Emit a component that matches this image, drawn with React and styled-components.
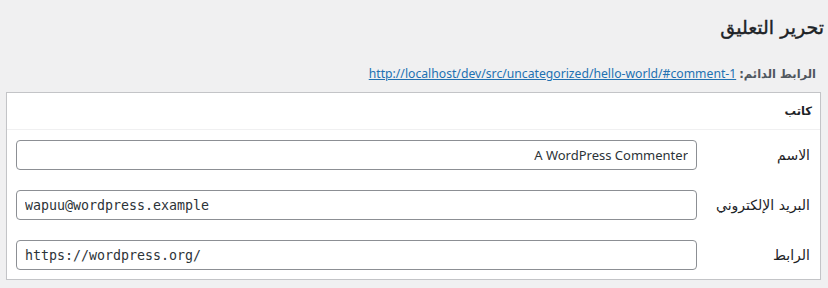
import React from 'react';
import styled, { createGlobalStyle } from 'styled-components';

const Global = createGlobalStyle`
  html, body {
    margin: 0;
    padding: 0;
    background: #f0f0f1;
  }
  body {
    direction: rtl;
    font-family: "DejaVu Sans", Tahoma, sans-serif;
    color: #3c434a;
    font-size: 13px;
  }
`;

const Wrap = styled.div`
  padding: 0 7px 0 7px;
`;

const Title = styled.h1`
  margin: 0 -3px 0 0;
  padding: 12px 0 0;
  font-size: 19px;
  font-weight: 400;
  line-height: 30px;
  color: #1d2327;
  -webkit-text-stroke: 0.4px #1d2327;
`;

const Permalink = styled.div`
  margin-top: 23px;
  padding-right: 5px;
  line-height: 18px;
  font-size: 11.5px;
  display: flex;
  align-items: baseline;
  gap: 3px;
`;

const PermaLabel = styled.strong`
  font-weight: 700;
  color: #50575e;
`;

const Link = styled.a`
  color: #2271b1;
  font-family: "Noto Sans", sans-serif;
  font-size: 12.2px;
  text-decoration: underline;
`;

const Box = styled.div`
  margin-top: 9px;
  margin-left: -1px;
  background: #fff;
  border: 1px solid #c3c4c7;
  box-shadow: 0 1px 1px rgba(0, 0, 0, 0.04);
`;

const BoxHead = styled.h2`
  margin: 0;
  padding: 0 8px;
  height: 36px;
  display: flex;
  align-items: center;
  font-size: 11.5px;
  font-weight: 700;
  color: #1d2327;
  border-bottom: 1px solid #f0f0f1;
`;

const Rows = styled.div`
  padding: 10px 9px 9px 9px;
  display: flex;
  flex-direction: column;
  gap: 20px;
`;

const Row = styled.div`
  display: flex;
  align-items: center;
  height: 30px;
`;

const Label = styled.label`
  width: 114px;
  flex: none;
  padding-right: 1px;
  box-sizing: border-box;
  font-size: 14px;
  color: #1d2327;
`;

const Input = styled.input`
  flex: 1;
  height: 30px;
  box-sizing: border-box;
  border: 1px solid #8c8f94;
  border-radius: 4px;
  padding: 0 8px;
  font-size: ${(p) => (p.$mono ? '13.3px' : '13px')};
  color: #2c3338;
  background: #fff;
  direction: ${(p) => (p.$ltr ? 'ltr' : 'rtl')};
  font-family: ${(p) =>
    p.$mono ? '"DejaVu Sans Mono", Consolas, monospace' : '"Noto Sans", sans-serif'};
  outline: none;
`;

export default function App() {
  return (
    <Wrap>
      <Global />
      <Title>تحرير التعليق</Title>
      <Permalink>
        <PermaLabel>الرابط الدائم:</PermaLabel>
        <Link href="#">http://localhost/dev/src/uncategorized/hello-world/#comment-1</Link>
      </Permalink>
      <Box>
        <BoxHead>كاتب</BoxHead>
        <Rows>
          <Row>
            <Label>الاسم</Label>
            <Input defaultValue="A WordPress Commenter" />
          </Row>
          <Row>
            <Label>البريد الإلكتروني</Label>
            <Input $ltr $mono defaultValue="wapuu@wordpress.example" />
          </Row>
          <Row>
            <Label>الرابط</Label>
            <Input $ltr $mono defaultValue="https://wordpress.org/" />
          </Row>
        </Rows>
      </Box>
    </Wrap>
  );
}
